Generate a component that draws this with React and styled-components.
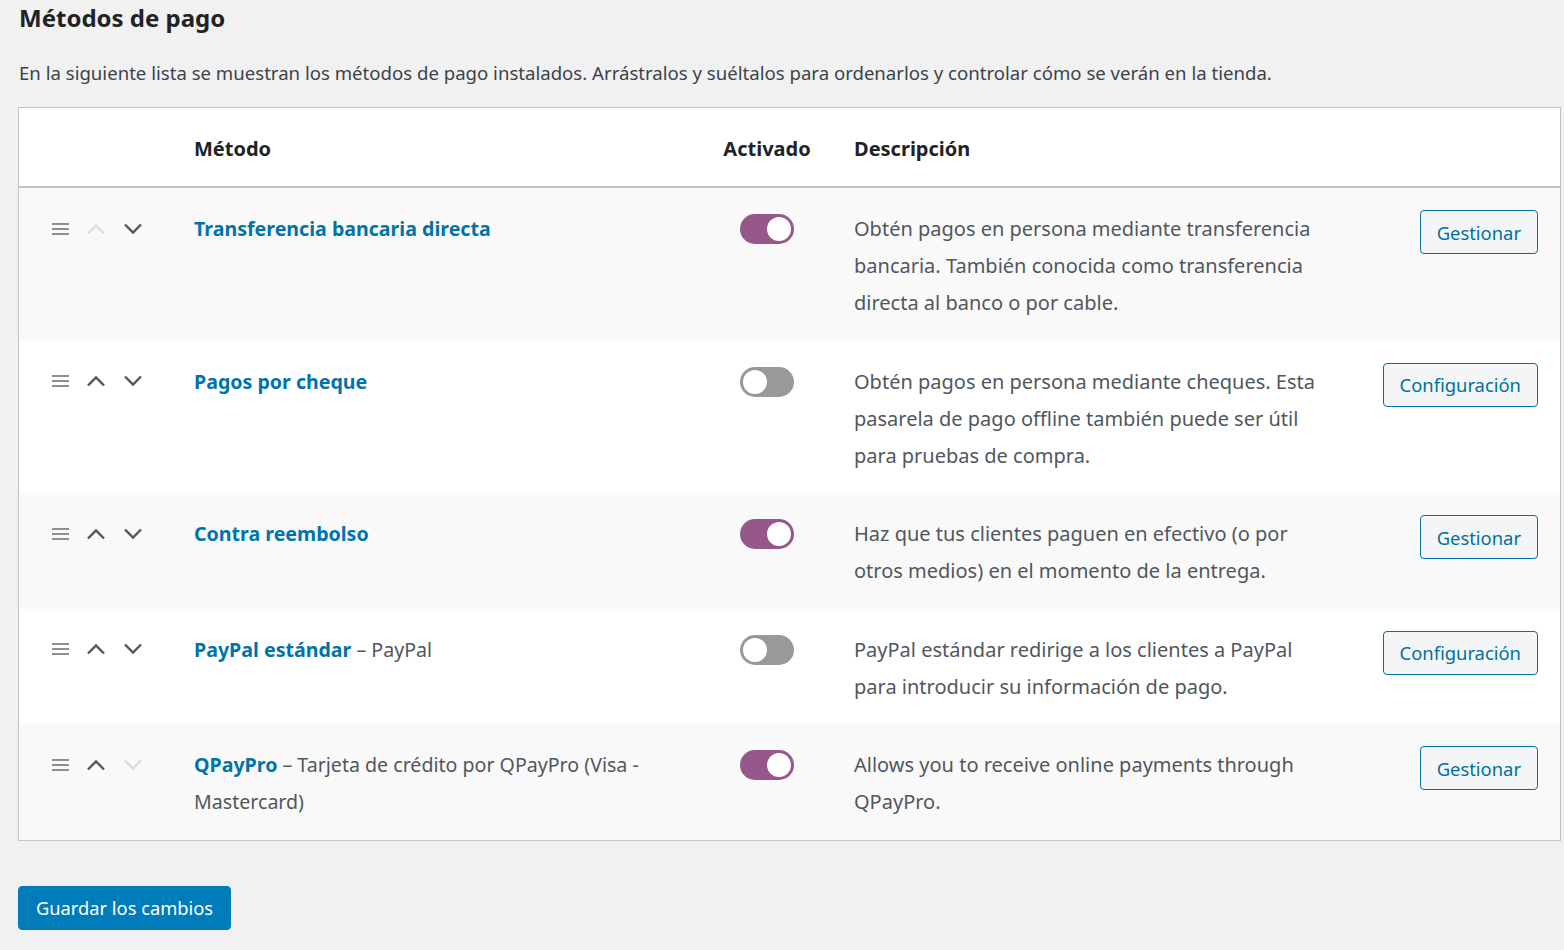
import styled, { createGlobalStyle } from 'styled-components';

const GlobalStyle = createGlobalStyle`
  html, body {
    margin: 0;
    padding: 0;
    background: #f1f1f1;
  }
  body {
    font-family: "Noto Sans", "Open Sans", sans-serif;
    color: #3c434a;
  }
`;

const Page = styled.div`
  padding: 0 3px 0 18px;
`;

const Heading = styled.h2`
  margin: 0;
  font-size: 24px;
  line-height: 36px;
  font-weight: 700;
  color: #1d2327;
  padding-left: 1px;
`;

const Intro = styled.p`
  margin: 19px 0 0;
  padding-left: 1px;
  font-size: 18.6px;
  line-height: 36px;
  color: #3c434a;
`;

const Table = styled.div`
  margin-top: 16px;
  border: 1px solid #c3c4c7;
  background: #fff;
`;

const Row = styled.div`
  display: grid;
  grid-template-columns: 175px 510px 126px 520px 1fr;
  background: ${(p) => (p.$striped ? '#f9f9f9' : '#fff')};
  font-size: 20px;
  line-height: 37px;
`;

const HeadRow = styled(Row)`
  height: 80px;
  align-items: center;
  border-bottom: 2px solid #c3c4c7;
  font-weight: 700;
  color: #1d2327;
  padding-top: 3px;
  box-sizing: border-box;
`;

const HeadCell = styled.div`
  text-align: ${(p) => p.$align || 'left'};
  padding-left: ${(p) => p.$pl || 0}px;
`;

const SortCell = styled.div`
  display: flex;
  align-items: center;
  gap: 17px;
  padding: 22px 0 0 33px;
  height: 37px;
`;

const Handle = styled.svg`
  width: 17px;
  height: 12px;
  display: block;
`;

const Arrow = styled.svg`
  width: 20px;
  height: 12px;
  display: block;
`;

const NameCell = styled.div`
  padding: 22px 30px 19.5px 0;
  font-size: 19.6px;
`;

const NameLink = styled.a`
  color: #0073aa;
  font-weight: 700;
  text-decoration: none;
`;

const Extra = styled.span`
  color: #50575e;
`;

const ToggleCell = styled.div`
  display: flex;
  justify-content: center;
  padding-top: 26px;
`;

const Toggle = styled.span`
  display: block;
  width: 54px;
  height: 30px;
  border-radius: 15px;
  background: ${(p) => (p.$on ? '#96588a' : '#999')};
  position: relative;

  &::after {
    content: '';
    position: absolute;
    top: 3px;
    left: ${(p) => (p.$on ? '27px' : '3px')};
    width: 24px;
    height: 24px;
    border-radius: 50%;
    background: #fff;
  }
`;

const Description = styled.div`
  padding: 22px 18px 19.5px 24px;
  color: #50575e;
`;

const ActionCell = styled.div`
  display: flex;
  justify-content: flex-end;
  align-items: flex-start;
  padding: 22px 22px 0 0;
`;

const ActionButton = styled.button`
  height: 44px;
  padding: 0 16px;
  border: 1px solid #0071a1;
  border-radius: 4px;
  background: #f3f5f6;
  color: #0071a1;
  font-family: inherit;
  font-size: 18.4px;
  cursor: pointer;
`;

const SaveButton = styled.button`
  margin-top: 45px;
  height: 44px;
  padding: 0 17px;
  border: 1px solid #007cba;
  border-radius: 4px;
  background: #007cba;
  color: #fff;
  font-family: "Noto Sans", "Open Sans", sans-serif;
  font-size: 18.3px;
  cursor: pointer;
`;

const methods = [
  {
    name: 'Transferencia bancaria directa',
    on: true,
    description:
      'Obtén pagos en persona mediante transferencia bancaria. También conocida como transferencia directa al banco o por cable.',
    action: 'Gestionar',
  },
  {
    name: 'Pagos por cheque',
    on: false,
    description:
      'Obtén pagos en persona mediante cheques. Esta pasarela de pago offline también puede ser útil para pruebas de compra.',
    action: 'Configuración',
  },
  {
    name: 'Contra reembolso',
    on: true,
    description:
      'Haz que tus clientes paguen en efectivo (o por otros medios) en el momento de la entrega.',
    action: 'Gestionar',
  },
  {
    name: 'PayPal estándar',
    extra: 'PayPal',
    on: false,
    description:
      'PayPal estándar redirige a los clientes a PayPal para introducir su información de pago.',
    action: 'Configuración',
  },
  {
    name: 'QPayPro',
    extra: 'Tarjeta de crédito por QPayPro (Visa - Mastercard)',
    on: true,
    description: 'Allows you to receive online payments through QPayPro.',
    action: 'Gestionar',
  },
];

function SortControls({ first, last }) {
  return (
    <SortCell>
      <Handle viewBox="0 0 17 12">
        <rect x="0" y="0" width="17" height="2" fill="#8c8f94" />
        <rect x="0" y="5" width="17" height="2" fill="#8c8f94" />
        <rect x="0" y="10" width="17" height="2" fill="#8c8f94" />
      </Handle>
      <Arrow viewBox="0 0 20 12">
        <path d="M2 10.5 L10 2.5 L18 10.5" fill="none" stroke={first ? '#dcdcde' : '#50575e'} strokeWidth="2.4" />
      </Arrow>
      <Arrow viewBox="0 0 20 12">
        <path d="M2 1.5 L10 9.5 L18 1.5" fill="none" stroke={last ? '#dcdcde' : '#50575e'} strokeWidth="2.4" />
      </Arrow>
    </SortCell>
  );
}

export default function App() {
  return (
    <Page>
      <GlobalStyle />
      <Heading>Métodos de pago</Heading>
      <Intro>
        En la siguiente lista se muestran los métodos de pago instalados. Arrástralos y suéltalos para ordenarlos y controlar cómo se verán en la tienda.
      </Intro>

      <Table>
        <HeadRow>
          <HeadCell />
          <HeadCell>Método</HeadCell>
          <HeadCell $align="center">Activado</HeadCell>
          <HeadCell $pl={24}>Descripción</HeadCell>
          <HeadCell />
        </HeadRow>

        {methods.map((m, i) => (
          <Row key={m.name} $striped={i % 2 === 0}>
            <SortControls first={i === 0} last={i === methods.length - 1} />
            <NameCell>
              <NameLink href="#">{m.name}</NameLink>
              {m.extra && <Extra>{' – ' + m.extra}</Extra>}
            </NameCell>
            <ToggleCell>
              <Toggle $on={m.on} />
            </ToggleCell>
            <Description>{m.description}</Description>
            <ActionCell>
              <ActionButton>{m.action}</ActionButton>
            </ActionCell>
          </Row>
        ))}
      </Table>

      <SaveButton>Guardar los cambios</SaveButton>
    </Page>
  );
}
